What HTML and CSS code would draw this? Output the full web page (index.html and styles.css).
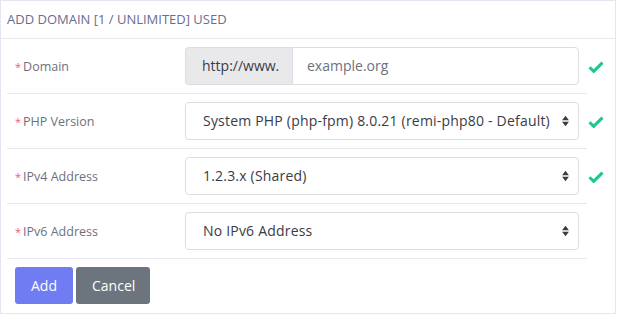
FILE: index.html
```html
<!DOCTYPE html>
<html lang="en">
  <head>
    <meta charset="UTF-8" />
    <meta name="viewport" content="width=device-width, initial-scale=1.0" />
    <title>Add Domain</title>
    <link rel="stylesheet" href="styles.css">
  </head>
  <body>
    <div class="card">
      <div class="card-header">ADD DOMAIN [1 / UNLIMITED] USED</div>
      <form class="card-body" id="domainForm">
        <div class="form-row">
          <label class="form-label" for="domain"><span class="req">*</span>Domain</label>
          <div class="form-control-cell">
            <div class="input-group">
              <span class="input-prepend">http://www.</span>
              <input type="text" id="domain" class="input" value="example.org" />
            </div>
          </div>
          <div class="status"><svg class="check" viewBox="0 0 16 12"><path d="M1.5 6.2l4.2 4.2 8.8-8.8" /></svg></div>
        </div>

        <div class="form-row">
          <label class="form-label" for="php"><span class="req">*</span>PHP Version</label>
          <div class="form-control-cell">
            <div class="select-wrap">
              <select id="php" class="select">
                <option>System PHP (php-fpm) 8.0.21 (remi-php80 - Default)</option>
              </select>
              <svg class="arrows" viewBox="0 0 10 14"><path d="M5 1l4 5H1z M5 13l4-5H1z" /></svg>
            </div>
          </div>
          <div class="status"><svg class="check" viewBox="0 0 16 12"><path d="M1.5 6.2l4.2 4.2 8.8-8.8" /></svg></div>
        </div>

        <div class="form-row">
          <label class="form-label" for="ipv4"><span class="req">*</span>IPv4 Address</label>
          <div class="form-control-cell">
            <div class="select-wrap">
              <select id="ipv4" class="select">
                <option>1.2.3.x (Shared)</option>
              </select>
              <svg class="arrows" viewBox="0 0 10 14"><path d="M5 1l4 5H1z M5 13l4-5H1z" /></svg>
            </div>
          </div>
          <div class="status"><svg class="check" viewBox="0 0 16 12"><path d="M1.5 6.2l4.2 4.2 8.8-8.8" /></svg></div>
        </div>

        <div class="form-row">
          <label class="form-label" for="ipv6"><span class="req">*</span>IPv6 Address</label>
          <div class="form-control-cell">
            <div class="select-wrap">
              <select id="ipv6" class="select">
                <option>No IPv6 Address</option>
              </select>
              <svg class="arrows" viewBox="0 0 10 14"><path d="M5 1l4 5H1z M5 13l4-5H1z" /></svg>
            </div>
          </div>
          <div class="status"></div>
        </div>

        <div class="actions">
          <button type="submit" class="btn btn-primary">Add</button>
          <button type="button" class="btn btn-secondary">Cancel</button>
        </div>
      </form>
    </div>
  </body>
</html>
```

FILE: styles.css
```css
* {
  margin: 0;
  padding: 0;
  box-sizing: border-box;
  font-family: "Open Sans", "Noto Sans", sans-serif;
}

body {
  background: #fff;
}

.card {
  width: 616px;
  height: 314px;
  border: 1px solid #e3e6f0;
  background: #fff;
}

.card-header {
  height: 38px;
  padding: 9px 6px 0;
  border-bottom: 1px solid #e8e9f0;
  color: #6b6c8c;
  font-size: 13px;
}

.card-body {
  padding-left: 6px;
}

.form-row {
  display: grid;
  grid-template-columns: 178px 402px 28px;
  height: 55px;
}

.form-label,
.form-control-cell {
  display: flex;
  align-items: center;
  border-bottom: 1px solid #e8e9f0;
}

.form-label {
  padding-left: 8px;
  color: #6e707e;
  font-size: 12.5px;
}

.req {
  color: #f05d7a;
  font-size: 11px;
  margin-right: 2px;
  align-self: flex-start;
  margin-top: 20px;
}

.form-control-cell {
  padding-right: 8px;
  padding-bottom: 1px;
}

.input-group {
  display: flex;
  width: 100%;
  height: 38px;
}

.input-prepend {
  width: 107px;
  display: flex;
  align-items: center;
  padding-left: 16px;
  background: #e9e9ec;
  border: 1px solid #dcdde3;
  border-right: none;
  border-radius: 4px 0 0 4px;
  color: #3a3b45;
  font-size: 14px;
}

.input {
  flex: 1;
  border: 1px solid #dcdde3;
  border-radius: 0 4px 4px 0;
  padding-left: 14px;
  color: #6e707e;
  font-size: 14px;
  outline: none;
}

.select-wrap {
  position: relative;
  width: 100%;
}

.select {
  width: 100%;
  height: 38px;
  appearance: none;
  -webkit-appearance: none;
  background: #fff;
  border: 1px solid #dcdde3;
  border-radius: 4px;
  padding-left: 17px;
  color: #3a3b45;
  font-size: 14px;
  letter-spacing: 0.2px;
  outline: none;
}

.arrows {
  position: absolute;
  right: 9px;
  top: 13px;
  width: 9px;
  height: 12px;
  fill: #3a3b45;
  pointer-events: none;
}

.status {
  display: flex;
  align-items: center;
  padding-left: 1px;
}

.check {
  width: 16px;
  height: 12px;
  fill: none;
  stroke: #1cc88a;
  stroke-width: 3;
}

.actions {
  display: flex;
  gap: 3px;
  padding: 8px 0 0 8px;
}

.btn {
  height: 37px;
  padding: 0 16px;
  border: none;
  border-radius: 3px;
  color: #fff;
  font-size: 14px;
  cursor: pointer;
}

.btn-primary {
  width: 58px;
  background: #6f7cf2;
}

.btn-secondary {
  width: 74px;
  background: #6c757d;
}
```
